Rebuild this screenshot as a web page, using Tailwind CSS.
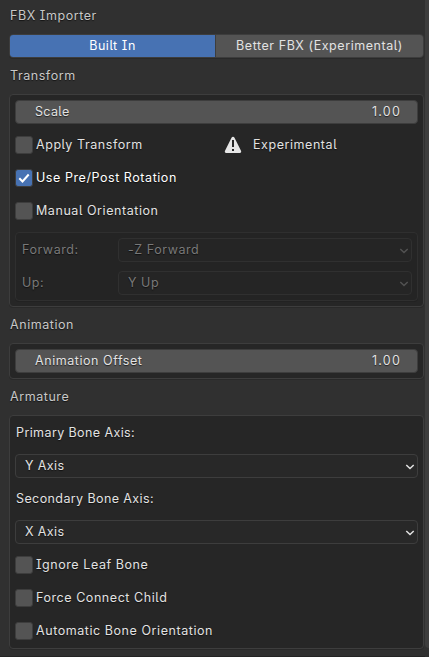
<!DOCTYPE html>
<html lang="en">
<head>
<meta charset="utf-8">
<title>FBX Importer</title>
<script src="https://cdn.jsdelivr.net/npm/@tailwindcss/browser@4"></script>
</head>
<body class="flex h-[657px] w-[429px] overflow-hidden bg-[#303030] font-['Inter','Noto_Sans',sans-serif] text-[12.500px] leading-6 tracking-[0.56px] whitespace-nowrap text-[#e2e2e2] [font-feature-settings:'cv05','cv08'] [text-shadow:0_1px_1px_rgb(0_0_0/0.6)]">
<main class="flex h-[657px] w-[425px] flex-col border-b border-[#242424] pl-[9px] pr-px">
  <h1 class="mt-1 h-6 pl-px text-[#c8c8c8]">FBX Importer</h1>
  <div class="mt-[6px] flex h-6 overflow-hidden rounded-[4px] border border-[#3d3d3d] text-center leading-[22px] shadow-[0_1px_0_#292929]">
    <button class="w-[205px] bg-[#4772b3] text-white">Built In</button>
    <button class="flex-1 border-l border-[#3d3d3d] bg-[#545454]">Better FBX (Experimental)</button>
  </div>

  <h2 class="mt-[6px] h-6 pl-px text-[#c8c8c8]">Transform</h2>
  <section class="mt-[6px] h-[213px] rounded-[4px] border border-[#3d3d3d] bg-[#262626] px-[5px] pt-[5px] shadow-[0_1px_0_#292929]">
    <div class="flex h-6 justify-between rounded-[4px] border border-[#3d3d3d] bg-[#545454] pr-4 pl-[19px] leading-[22px]"><span class="tracking-[0.35px]">Scale</span><span class="tracking-[1.200px]">1.00</span></div>
    <div class="mt-[9px] flex h-6">
      <label class="flex w-[209px] items-center gap-[3px]"><span class="size-[18px] rounded-[3px] border border-[#3d3d3d] bg-[#545454]"></span>Apply Transform</label>
      <span class="flex items-center gap-[11px]">
        <svg class="size-[18px]" viewBox="0 0 18 18"><path d="M9 .8c.7 0 1.100.3 1.500 1l6.500 13c.5 1.200 0 2.200-1.200 2.200H2.200C1 17 .5 16 1 14.800l6.500-13c.4-.7.800-1 1.500-1Z" fill="#e6e6e6"/><path d="M8 4h2v7H8zM8 13h2v2H8z" fill="#262626"/></svg>
        Experimental</span>
    </div>
    <label class="mt-[9px] flex h-6 items-center gap-[3px] text-white"><span class="size-[18px] rounded-[3px] border border-[#3d3d3d] bg-[#4772b3]"><svg class="size-4" viewBox="0 0 16 16" fill="none" stroke="#fff" stroke-width="2"><path d="m3.300 8.300 3.200 3.200 6.200-7"/></svg></span>Use Pre/Post Rotation</label>
    <label class="mt-[9px] flex h-6 items-center gap-[3px]"><span class="size-[18px] rounded-[3px] border border-[#3d3d3d] bg-[#545454]"></span>Manual Orientation</label>
    <div class="mt-[9px] flex h-[69px] flex-col gap-[9px] rounded-[4px] border border-[#2f2f2f] bg-[#242424] p-[5px] text-[#797979] shadow-[0_1px_0_#222]">
      <div class="flex h-6"><span class="w-[97px] pl-px">Forward:</span>
        <div class="flex flex-1 items-center justify-between rounded-[4px] border border-[#303030] bg-[#252525] pr-[2px] pl-[9px]">-Z Forward<svg class="mt-[2px] size-[10px]" viewBox="0 0 10 10" fill="none" stroke="#525252" stroke-width="1.500"><path d="m1.300 3 3.700 3.500L8.700 3"/></svg></div></div>
      <div class="flex h-6"><span class="w-[97px] pl-px">Up:</span>
        <div class="flex flex-1 items-center justify-between rounded-[4px] border border-[#303030] bg-[#252525] pr-[2px] pl-[9px]">Y Up<svg class="mt-[2px] size-[10px]" viewBox="0 0 10 10" fill="none" stroke="#525252" stroke-width="1.500"><path d="m1.300 3 3.700 3.500L8.700 3"/></svg></div></div>
    </div>
  </section>

  <h2 class="mt-[6px] h-6 pl-px text-[#c8c8c8]">Animation</h2>
  <section class="mt-[6px] h-9 rounded-[4px] border border-[#3d3d3d] bg-[#262626] p-[5px] shadow-[0_1px_0_#292929]">
    <div class="flex h-6 justify-between rounded-[4px] border border-[#3d3d3d] bg-[#545454] pr-4 pl-[19px] leading-[22px]"><span>Animation Offset</span><span class="tracking-[1.200px]">1.00</span></div>
  </section>

  <h2 class="mt-[6px] h-6 pl-px text-[#c8c8c8]">Armature</h2>
  <section class="mt-[6px] flex h-[234px] flex-col gap-[9px] rounded-[4px] border border-[#3d3d3d] bg-[#262626] p-[5px] shadow-[0_1px_0_#292929]">
    <div class="h-6 pl-px tracking-[0.4px]">Primary Bone Axis:</div>
    <div class="flex h-6 items-center justify-between rounded-[4px] border border-[#3d3d3d] bg-[#282828] pr-[2px] pl-[9px]"><span class="tracking-[0.4px]">Y Axis</span><svg class="mt-[2px] size-[10px]" viewBox="0 0 10 10" fill="none" stroke="#e2e2e2" stroke-width="1.500"><path d="m1.300 3 3.700 3.500L8.700 3"/></svg></div>
    <div class="h-6 pl-px tracking-[0.4px]">Secondary Bone Axis:</div>
    <div class="flex h-6 items-center justify-between rounded-[4px] border border-[#3d3d3d] bg-[#282828] pr-[2px] pl-[9px]"><span class="tracking-[0.4px]">X Axis</span><svg class="mt-[2px] size-[10px]" viewBox="0 0 10 10" fill="none" stroke="#e2e2e2" stroke-width="1.500"><path d="m1.300 3 3.700 3.500L8.700 3"/></svg></div>
    <label class="flex h-6 items-center gap-[3px]"><span class="size-[18px] rounded-[3px] border border-[#3d3d3d] bg-[#545454]"></span>Ignore Leaf Bone</label>
    <label class="flex h-6 items-center gap-[3px]"><span class="size-[18px] rounded-[3px] border border-[#3d3d3d] bg-[#545454]"></span>Force Connect Child</label>
    <label class="flex h-6 items-center gap-[3px]"><span class="size-[18px] rounded-[3px] border border-[#3d3d3d] bg-[#545454]"></span>Automatic Bone Orientation</label>
  </section>
</main>
<aside class="h-[648px] w-1 rounded-bl-[4px] bg-[#3d3d3d]"></aside>
</body>
</html>
